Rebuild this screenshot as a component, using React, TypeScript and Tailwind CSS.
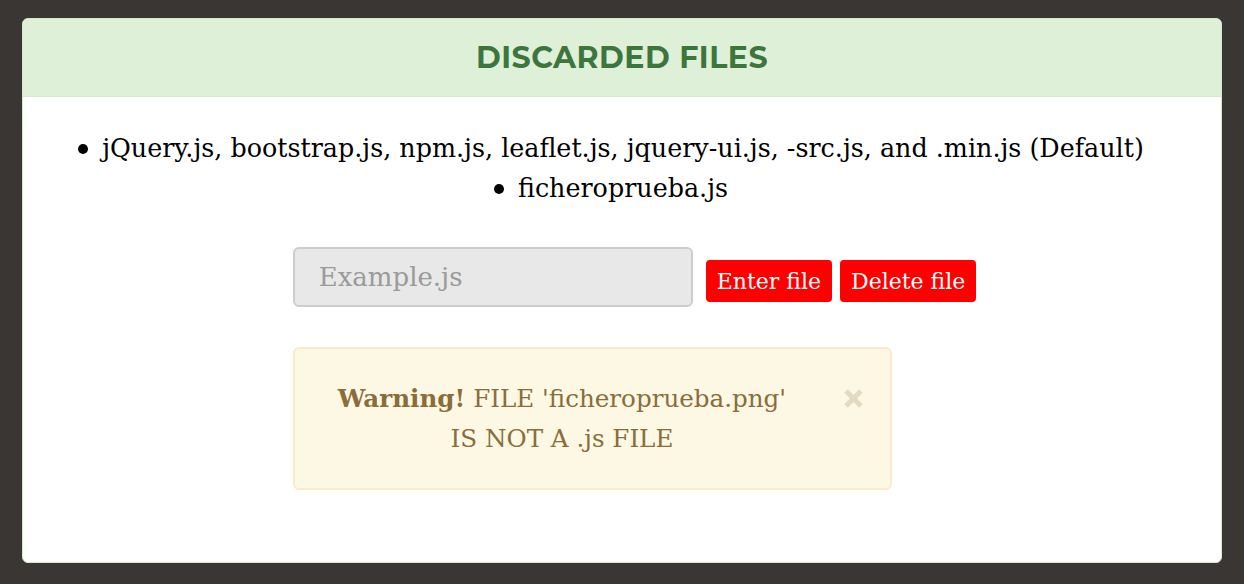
const items = [
  "jQuery.js, bootstrap.js, npm.js, leaflet.js, jquery-ui.js, -src.js, and .min.js (Default)",
  "ficheroprueba.js",
];

export default function App() {
  return (
    <div className="min-h-[584px] w-full bg-[#393634] px-[22px] pt-[18px] pb-[22px]">
      <div className="overflow-hidden rounded-[6px] border border-[#d6e9c6] bg-white">
        <div className="flex h-[78px] items-center justify-center border-b border-[#d6e9c6] bg-[#dff0d8]">
          <h2 className="font-['Montserrat','Roboto',sans-serif] text-[30px] font-bold tracking-[0.5px] text-[#3c763d] uppercase">
            Discarded files
          </h2>
        </div>
        <div className="flex h-[465px] flex-col items-center pt-[31px] font-['Roboto_Slab','DejaVu_Serif',serif] text-black">
          <ul className="pr-[22px] text-center text-[25.4px] leading-[40px]">
            {items.map((item) => (
              <li key={item}>
                <span className="mr-[14px] mb-[3px] inline-block h-[10px] w-[10px] rounded-full bg-black align-middle" />
                {item}
              </li>
            ))}
          </ul>
          <div className="mt-[39px] flex items-start gap-[8px] pl-[25px]">
            <input
              type="text"
              placeholder="Example.js"
              className="h-[60px] w-[400px] rounded-[6px] border-2 border-[#cccccc] bg-[#e8e8e8] px-[24px] text-[26px] text-black placeholder:text-[#9a9a9a] outline-none"
            />
            <div className="mt-[13px] flex gap-[8px] pl-[5px]">
              <button className="h-[42px] rounded-[4px] bg-[#ff0000] px-[11px] text-[22px] text-white">Enter file</button>
              <button className="h-[42px] rounded-[4px] bg-[#ff0000] px-[11px] text-[22px] text-white">Delete file</button>
            </div>
          </div>
          <div className="relative mt-[40px] mr-[60px] flex h-[143px] w-[599px] items-center justify-center rounded-[6px] border-2 border-[#faebcc] bg-[#fcf8e3] pr-[60px] text-center text-[24.6px] leading-[40px] text-[#8a6d3b]">
            <p>
              <b>Warning!</b> FILE 'ficheroprueba.png'
              <br />
              IS NOT A .js FILE
            </p>
            <button aria-label="close" className="absolute top-[39px] right-[26px]">
              <svg width="21" height="21" viewBox="0 0 21 21" className="block">
                <path d="M3 3 L18 18 M18 3 L3 18" stroke="#e2dac2" strokeWidth="5" />
              </svg>
            </button>
          </div>
        </div>
      </div>
    </div>
  );
}
